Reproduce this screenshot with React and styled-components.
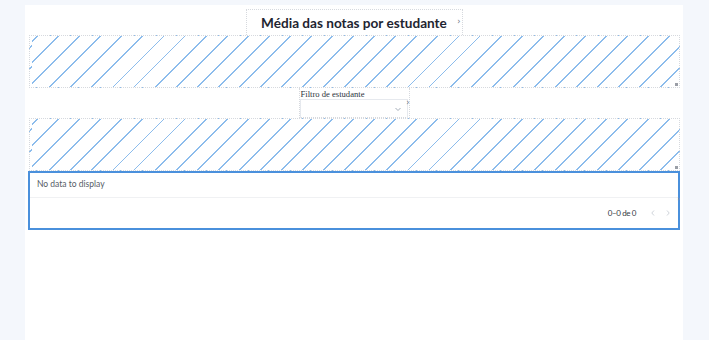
import styled, { createGlobalStyle } from "styled-components";

const GlobalStyle = createGlobalStyle`
  html, body {
    margin: 0;
    padding: 0;
    background: #f4f7fc;
    font-family: Lato, "Liberation Sans", sans-serif;
  }
`;

function ChevronDown() {
  return (
    <svg width="8" height="8" viewBox="0 0 8 8" fill="none">
      <path d="M1.5 3l2.5 2.5L6.5 3" stroke="#9aa3b0" strokeWidth="0.9" />
    </svg>
  );
}

function Chevron({ dir }) {
  return (
    <svg width="6" height="8" viewBox="0 0 6 8" fill="none">
      <path
        d={dir === "left" ? "M4 1.5L1.8 4 4 6.5" : "M2 1.5L4.2 4 2 6.5"}
        stroke="#c9ced6"
        strokeWidth="0.9"
      />
    </svg>
  );
}

export default function App() {
  return (
    <>
      <GlobalStyle />
      <Page>
        <Panel>
          <TitleRow>
            <TitleBox>
              <Title>Média das notas por estudante</Title>
              <Handle>›</Handle>
            </TitleBox>
          </TitleRow>
          <Hatch>
            <Corner />
          </Hatch>
          <FilterRow>
            <FilterBox>
              <Label>Filtro de estudante</Label>
              <Select>
                <ChevronDown />
              </Select>
              <Handle small>›</Handle>
            </FilterBox>
          </FilterRow>
          <Hatch>
            <Corner />
          </Hatch>
          <Table>
            <Empty>No data to display</Empty>
            <Footer>
              <Count>0–0 de 0</Count>
              <Pager>
                <Chevron dir="left" />
                <Chevron dir="right" />
              </Pager>
              <SideMark>›</SideMark>
            </Footer>
          </Table>
        </Panel>
      </Page>
    </>
  );
}

const Page = styled.div`
  min-height: 340px;
  padding-top: 5px;
  padding-left: 25px;
  box-sizing: border-box;
`;

const Panel = styled.div`
  width: 658px;
  min-height: 335px;
  background: #ffffff;
  padding: 4px 3px 0 3px;
  box-sizing: border-box;
  display: flex;
  flex-direction: column;
`;

const TitleRow = styled.div`
  display: flex;
  justify-content: center;
  padding-left: 7px;
  padding-right: 7px;
`;

const TitleBox = styled.div`
  position: relative;
  width: 217px;
  height: 26px;
  border: 1px dotted #d6d9de;
  border-bottom: none;
  box-sizing: border-box;
  display: flex;
  align-items: center;
  justify-content: center;
`;

const Title = styled.div`
  font-family: Lato, "Liberation Sans", sans-serif;
  font-weight: 700;
  font-size: 13.6px;
  white-space: nowrap;
  color: #1f2531;
  margin-top: 1px;
`;

const Handle = styled.span`
  position: absolute;
  right: ${(p) => (p.small ? "-1px" : "1px")};
  top: ${(p) => (p.small ? "11px" : "8px")};
  font-size: 8px;
  line-height: 8px;
  color: #6b7280;
  font-family: "DejaVu Sans", sans-serif;
`;

const Hatch = styled.div`
  position: relative;
  margin-left: 1px;
  width: 651px;
  height: 53px;
  box-sizing: border-box;
  border: 1px dotted #d6d9de;
  background: repeating-linear-gradient(
    -45deg,
    #ffffff 0px,
    #ffffff 13.6px,
    #8cbcec 13.6px,
    #8cbcec 14.9px
  );
  background-position: 2px 0;
`;

const Corner = styled.div`
  position: absolute;
  right: 1px;
  bottom: 1px;
  width: 3px;
  height: 3px;
  background: #9a9ea6;
`;

const FilterRow = styled.div`
  height: 30px;
  display: flex;
  justify-content: center;
`;

const FilterBox = styled.div`
  position: relative;
  width: 111px;
  box-sizing: border-box;
  border: 1px dotted #d6d9de;
  border-top: none;
  padding: 0 2px 0 1px;
`;

const Label = styled.div`
  font-family: "Liberation Serif", serif;
  font-size: 8.6px;
  color: #2d3440;
  line-height: 10px;
  margin-top: 1px;
`;

const Select = styled.div`
  width: 108px;
  height: 20px;
  box-sizing: border-box;
  border: 1px solid #e6e9ee;
  display: flex;
  align-items: center;
  justify-content: flex-end;
  padding-right: 5px;
  margin-left: -1px;
`;

const Table = styled.div`
  width: 652px;
  height: 59px;
  box-sizing: border-box;
  border: 2px solid #4a90dc;
  display: flex;
  flex-direction: column;
`;

const Empty = styled.div`
  height: 25px;
  box-sizing: border-box;
  border-bottom: 1px solid #f0f1f3;
  padding: 0 0 2px 7px;
  font-size: 8.5px;
  color: #555b66;
  display: flex;
  align-items: center;
`;

const Footer = styled.div`
  position: relative;
  flex: 1;
  display: flex;
  align-items: center;
  justify-content: flex-end;
  padding-right: 7px;
`;

const Count = styled.span`
  font-size: 8px;
  color: #333a45;
  margin-right: 14px;
  letter-spacing: -0.4px;
`;

const Pager = styled.div`
  display: flex;
  gap: 9px;
  align-items: center;
`;

const SideMark = styled.span`
  position: absolute;
  right: -2px;
  top: -3px;
  font-size: 7px;
  color: #8a8f98;
  font-family: "DejaVu Sans", sans-serif;
`;
